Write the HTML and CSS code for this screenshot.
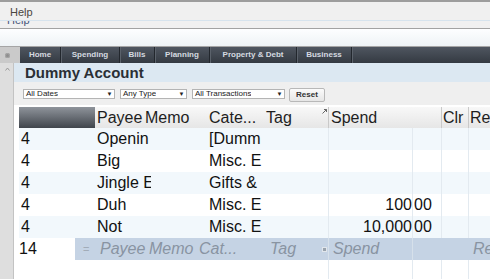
FILE: index.html
```html
<!DOCTYPE html>
<html>
<head>
<meta charset="utf-8">
<link rel="stylesheet" href="styles.css">
</head>
<body>
<div class="menubar"><span class="menu">Help</span></div>
<div class="clipbar"><span class="cliptext">Help</span></div>
<div class="banner"></div>
<div class="tabbar">
  <div class="corner"><span class="gear"></span></div>
  <div class="tab t-home">Home</div>
  <div class="tab t-spend">Spending</div>
  <div class="tab t-bills">Bills</div>
  <div class="tab t-plan">Planning</div>
  <div class="tab t-prop">Property &amp; Debt</div>
  <div class="tab t-bus">Business</div>
  <div class="tab t-rest"></div>
</div>
<div class="body">
  <div class="strip"><svg class="chev" width="5" height="4" viewBox="0 0 5 4"><path d="M0.5 3.5 L2.5 1 L4.5 3.5" stroke="#9a9a9a" stroke-width="1" fill="none"/></svg></div>
  <div class="pane">
    <div class="acct">Dummy Account</div>
    <div class="filters">
      <div class="sel s1"><span class="seltext">All Dates</span><span class="arrow">&#9660;</span></div>
      <div class="sel s2"><span class="seltext">Any Type</span><span class="arrow">&#9660;</span></div>
      <div class="sel s3"><span class="seltext">All Transactions</span><span class="arrow">&#9660;</span></div>
      <div class="btn">Reset</div>
    </div>
    <div class="grid">
      <div class="ghead">
        <div class="hnum"></div>
        <div class="h h-payee">Payee</div>
        <div class="h h-memo">Memo</div>
        <div class="h h-cat">Cate...</div>
        <div class="h h-tag">Tag<svg class="grip" width="5" height="5" viewBox="0 0 5 5"><path d="M0.5 4.5 L4.5 0.5 M2 0.5 H4.5 V3" stroke="#666" stroke-width="1" fill="none"/></svg></div>
        <div class="h h-spend">Spend</div>
        <div class="h h-clr">Clr</div>
        <div class="h h-re">Re</div>
      </div>
      <div class="row odd">
        <div class="c c-num">4</div><div class="c c-payee">Openin</div><div class="c c-memo"></div><div class="c c-cat">[Dumm</div><div class="c c-tag"></div><div class="c c-dol"></div><div class="c c-cent"></div><div class="c c-clr"></div><div class="c c-re"></div>
      </div>
      <div class="row">
        <div class="c c-num">4</div><div class="c c-payee">Big</div><div class="c c-memo"></div><div class="c c-cat">Misc. E</div><div class="c c-tag"></div><div class="c c-dol"></div><div class="c c-cent"></div><div class="c c-clr"></div><div class="c c-re"></div>
      </div>
      <div class="row odd">
        <div class="c c-num">4</div><div class="c c-payee">Jingle E</div><div class="c c-memo"></div><div class="c c-cat">Gifts &amp;</div><div class="c c-tag"></div><div class="c c-dol"></div><div class="c c-cent"></div><div class="c c-clr"></div><div class="c c-re"></div>
      </div>
      <div class="row">
        <div class="c c-num">4</div><div class="c c-payee">Duh</div><div class="c c-memo"></div><div class="c c-cat">Misc. E</div><div class="c c-tag"></div><div class="c c-dol">100</div><div class="c c-cent">00</div><div class="c c-clr"></div><div class="c c-re"></div>
      </div>
      <div class="row odd">
        <div class="c c-num">4</div><div class="c c-payee">Not</div><div class="c c-memo"></div><div class="c c-cat">Misc. E</div><div class="c c-tag"></div><div class="c c-dol">10,000</div><div class="c c-cent">00</div><div class="c c-clr"></div><div class="c c-re"></div>
      </div>
      <div class="row entry">
        <div class="e-num">14</div>
        <div class="e e-eq">=</div>
        <div class="e e-payee">Payee</div>
        <div class="e e-memo">Memo</div>
        <div class="e e-cat">Cat...</div>
        <div class="e e-tag">Tag<span class="sq"></span></div>
        <div class="e e-spend">Spend</div>
        <div class="e e-cent"></div>
        <div class="e e-clr"></div>
        <div class="e e-re">Re</div>
      </div>
      <div class="row filler">
        <div class="c c-num"></div><div class="c c-payee"></div><div class="c c-memo"></div><div class="c c-cat"></div><div class="c c-tag"></div><div class="c c-dol"></div><div class="c c-cent"></div><div class="c c-clr"></div><div class="c c-re"></div>
      </div>
    </div>
  </div>
</div>
</body>
</html>
```

FILE: styles.css
```css
* { box-sizing: border-box; }
body {
  margin: 0;
  width: 490px;
  height: 279px;
  overflow: hidden;
  background: #ffffff;
  font-family: "Liberation Sans", Arial, sans-serif;
}
.menubar {
  height: 20px;
  border-top: 2px solid #9d9d9d;
  background: #f0f0f0;
  padding: 4px 0 0 10px;
  font-size: 11px;
  line-height: 13px;
  color: #4a4640;
}
.clipbar {
  height: 9px;
  border-top: 1px solid #d6e3ed;
  border-bottom: 1px solid #a2a2a2;
  background: #f0f0f0;
  overflow: hidden;
  padding-left: 7px;
}
.cliptext {
  display: block;
  margin-top: -6px;
  font-size: 11px;
  line-height: 11px;
  color: #44557a;
}
.banner {
  height: 18px;
  background: linear-gradient(#fdfeff, #eef3f6);
  border-bottom: 1px solid #a5a5a5;
}
.tabbar {
  display: flex;
  height: 16px;
}
.corner {
  width: 20px;
  flex: none;
  background: #cacaca;
  display: flex;
  align-items: center;
  padding-left: 5px;
}
.gear {
  width: 5px;
  height: 5px;
  border-radius: 50%;
  background: #8e8e8e;
  box-shadow: inset 0 0 0 1px #a6a6a6;
}
.tab {
  flex: none;
  background: linear-gradient(#4f5660, #343a42);
  border-right: 1px solid #22272d;
  box-shadow: inset 1px 0 0 #5b626b;
  color: #d5dae0;
  font-size: 8px;
  font-weight: bold;
  line-height: 16px;
  text-align: center;
  white-space: nowrap;
}
.t-home { width: 41px; box-shadow: none; }
.t-spend { width: 59px; }
.t-bills { width: 35px; }
.t-plan { width: 55px; }
.t-prop { width: 87px; }
.t-bus { width: 55px; }
.t-rest { flex: 1; border-right: none; }
.body {
  display: flex;
  height: 216px;
  overflow: hidden;
}
.strip {
  width: 14px;
  flex: none;
  background: #dedede;
  border-right: 1px solid #c3c3c3;
  padding: 4px 0 0 5px;
}
.chev { display: block; }
.pane {
  flex: 1;
  min-width: 0;
  overflow: hidden;
  background: #ffffff;
}
.acct {
  height: 19px;
  background: #dce8f2;
  padding-left: 11px;
  font-size: 15px;
  font-weight: bold;
  line-height: 20px;
  color: #2a2f35;
}
.filters {
  height: 23px;
  background: #efefef;
  display: flex;
  align-items: flex-start;
  padding: 7px 0 0 9px;
}
.sel {
  flex: none;
  height: 10px;
  background: #ffffff;
  border: 1px solid #b4b4b4;
  display: flex;
  align-items: center;
  justify-content: space-between;
  font-size: 8px;
  line-height: 8px;
  color: #1a1a1a;
}
.seltext { padding-left: 2px; white-space: nowrap; overflow: hidden; }
.arrow {
  font-size: 6px;
  width: 9px;
  text-align: center;
  color: #222;
}
.s1 { width: 92px; }
.s2 { width: 67px; margin-left: 5px; }
.s3 { width: 93px; margin-left: 5px; }
.btn {
  flex: none;
  margin-left: 4px;
  margin-top: -1px;
  width: 36px;
  height: 14px;
  border: 1px solid #b8b8b8;
  border-radius: 2px;
  background: linear-gradient(#fbfbfb, #e6e6e6);
  font-size: 8px;
  font-weight: bold;
  line-height: 12px;
  text-align: center;
  color: #333;
}
.grid {
  margin: 2px 0 0 5px;
}
.ghead {
  display: flex;
  height: 21px;
  background: linear-gradient(#f8f8f8, #e6e6e6);
}
.hnum {
  flex: none;
  width: 76px;
  background: linear-gradient(#8f949b, #40454c);
}
.h {
  flex: none;
  font-size: 16px;
  line-height: 20px;
  padding-top: 1px;
  color: #1e1e1e;
  white-space: nowrap;
  overflow: hidden;
}
.h-payee { width: 49px; padding-left: 2px; }
.h-memo { width: 63px; padding-left: 1px; }
.h-cat { width: 57px; padding-left: 2px; }
.h-tag { width: 64px; padding-left: 2px; position: relative; }
.grip { position: absolute; right: 1px; top: 2px; }
.h-spend { width: 113px; padding-left: 2px; border-left: 1px solid #c9c9c9; }
.h-clr { width: 27px; padding-left: 1px; border-left: 1px solid #c9c9c9; }
.h-re { flex: 1 1 0; min-width: 0; padding-left: 1px; border-left: 1px solid #c9c9c9; }
.row {
  display: flex;
  height: 22px;
  background: #ffffff;
}
.row.odd { background: #f2f8fc; }
.c {
  flex: none;
  font-size: 16px;
  line-height: 22px;
  color: #111;
  white-space: nowrap;
  overflow: hidden;
}
.c-num { width: 76px; padding-left: 2px; }
.c-payee { width: 56px; padding-left: 2px; }
.c-memo { width: 56px; }
.c-cat { width: 56px; padding-left: 2px; }
.c-tag { width: 65px; }
.c-dol { width: 84px; text-align: right; border-left: 1px solid #e3eaf0; }
.c-cent { width: 29px; padding-left: 1px; border-left: 1px solid #e3eaf0; }
.c-clr { width: 27px; border-left: 1px solid #e3eaf0; }
.c-re { flex: 1 1 0; min-width: 0; border-left: 1px solid #e3eaf0; }
.row.entry { background: #c5d3e4; }
.e-num {
  flex: none;
  width: 56px;
  background: #ffffff;
  font-size: 16px;
  line-height: 22px;
  color: #111;
}
.e {
  flex: none;
  font-size: 16px;
  font-style: italic;
  line-height: 22px;
  color: #8994a2;
  white-space: nowrap;
  overflow: hidden;
}
.e-eq { width: 25px; font-style: normal; font-size: 11px; padding-left: 8px; color: #a2acb8; }
.e-payee { width: 49px; }
.e-memo { width: 50px; }
.e-cat { width: 71px; }
.e-tag { width: 58px; position: relative; }
.sq {
  position: absolute;
  right: 1px;
  top: 9px;
  width: 5px;
  height: 5px;
  background: #9aa3ad;
  border: 1px solid #e1e6ec;
}
.e-spend { width: 84px; padding-left: 4px; border-left: 1px solid #d6e0ea; }
.e-cent { width: 29px; border-left: 1px solid #d6e0ea; }
.e-clr { width: 27px; }
.e-re { flex: 1 1 0; min-width: 0; padding-left: 5px; }
.row.filler { height: 19px; }
```
